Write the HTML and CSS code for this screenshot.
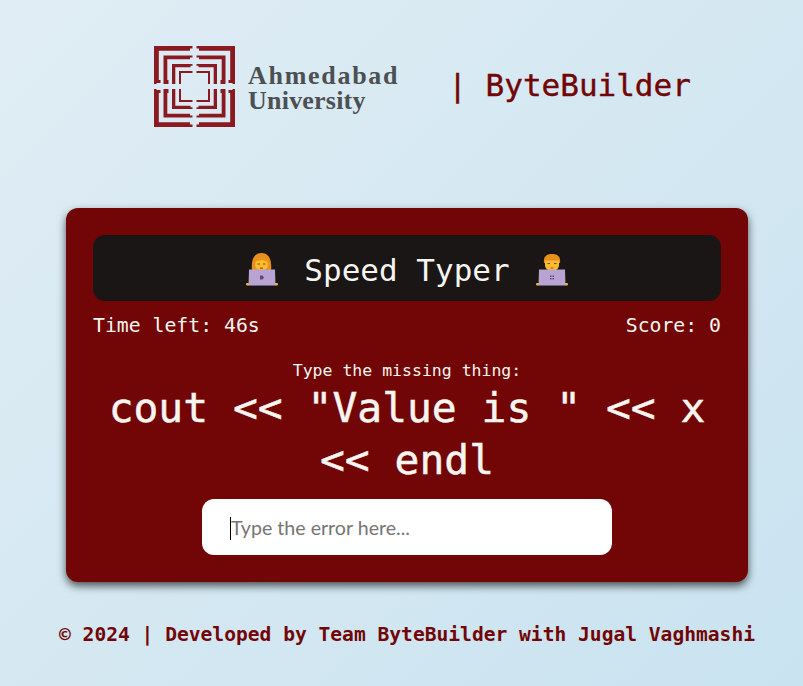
FILE: index.html
```html
<!DOCTYPE html>
<html lang="en">
<head>
    <meta charset="utf-8" />
    <title>ByteBuilder | Speed Typer</title>
    <link rel="stylesheet" href="styles.css">
</head>
<body>
    <header class="top">
        <div class="brand">
            <svg class="brand-mark" width="81" height="81" viewBox="0 0 81 81">
                <defs>
                    <g id="quad">
                        <polygon points="0,0 38.500,0 38.500,2.500 36,2.500 36,4.800 4.800,4.800 4.800,34 6.500,34 6.500,37 2.500,37 2.500,38 0,38" />
                        <polygon points="9.500,9.500 38.500,9.500 38.500,11.500 36,11.500 36,13.300 13.300,13.300 13.300,34 14.500,34 14.500,38 9.500,38" />
                        <polygon points="18,18 38.500,18 38.500,19.800 36.500,19.800 36.500,21.300 21.300,21.300 21.300,38 18,38" />
                        <polygon points="25,25 38.500,25 38.500,27 27,27 27,38 25,38" />
                    </g>
                </defs>
                <use href="#quad" />
                <use href="#quad" transform="translate(81,0) scale(-1,1)" />
                <use href="#quad" transform="translate(0,81) scale(1,-1)" />
                <use href="#quad" transform="translate(81,81) scale(-1,-1)" />
            </svg>
            <div class="brand-name">
                <span class="brand-first">Ahmedabad</span>
                <span class="brand-second">University</span>
            </div>
        </div>
        <div class="team">| ByteBuilder</div>
    </header>

    <main class="game">
        <h1 class="game-title">
            <svg class="emoji" width="32" height="34" viewBox="0 0 32 34">
                <path class="hair" d="M6 18 C5 9 7 0 15.500 0 C24 0 26 9 25 18 Z" />
                <ellipse class="skin" cx="15.500" cy="11.500" rx="6.500" ry="6.500" />
                <path class="hair" d="M8.500 9 C11 3.500 20 3.500 22.500 9 C18 6.500 13 6.500 8.500 9 Z" />
                <rect class="eye" x="11.500" y="10.500" width="2.500" height="1" />
                <rect class="eye" x="17" y="10.500" width="2.500" height="1" />
                <rect class="lips" x="14" y="14.500" width="3" height="1.300" />
                <rect class="hand" x="0" y="30" width="3.500" height="2.500" rx="1.200" />
                <rect class="hand" x="28.500" y="30" width="3.500" height="2.500" rx="1.200" />
                <path class="laptop" d="M3 16.500 H29 L29.500 32.500 H2.500 Z" />
                <rect class="laptop-foot" x="3" y="32" width="26" height="1" />
                <path class="logo-dot" d="M14 22.500 H16.500 L18 24.500 L16.500 26.500 H14 Z" />
            </svg>
            <span>Speed Typer</span>
            <svg class="emoji" width="32" height="34" viewBox="0 0 32 34">
                <path class="hair" d="M8 10 C7 3 11 1 16 1 C21 1 25 3 24 10 Z" />
                <path class="skin" d="M9 7.500 H23 V12 C23 16 19 18 16 18 C13 18 9 16 9 12 Z" />
                <rect class="eye" x="11.500" y="10" width="2.500" height="1" />
                <rect class="eye" x="18" y="10" width="2.500" height="1" />
                <rect class="lips" x="14.500" y="14.500" width="3" height="1" />
                <rect class="hand" x="0" y="30" width="3.500" height="2.500" rx="1.200" />
                <rect class="hand" x="28.500" y="30" width="3.500" height="2.500" rx="1.200" />
                <path class="laptop" d="M3 16.500 H29 L29.500 32.500 H2.500 Z" />
                <rect class="laptop-foot" x="3" y="32" width="26" height="1" />
                <path class="logo-dot" d="M14 22.500 h1.500 v1.500 h-1.500 Z M16.500 22.500 h1.500 v1.500 h-1.500 Z M14 25 h1.500 v1.500 h-1.500 Z M16.500 25 h1.500 v1.500 h-1.500 Z" />
            </svg>
        </h1>

        <div class="stats">
            <span>Time left: 46s</span>
            <span>Score: 0</span>
        </div>

        <p class="prompt">Type the missing thing:</p>
        <p class="snippet">cout &lt;&lt; "Value is " &lt;&lt; x &lt;&lt; endl</p>

        <div class="answer">
            <input class="answer-input" type="text" placeholder="Type the error here...">
            <span class="caret"></span>
        </div>
    </main>

    <footer class="credit">© 2024 | Developed by Team ByteBuilder with Jugal Vaghmashi</footer>
</body>
</html>
```

FILE: styles.css
```css
* {
    box-sizing: border-box;
}

html {
    overflow: hidden;
}

/* page runs a little wider than the window, so everything centres at 407 */
body {
    margin: 0;
    width: 814px;
    height: 686px;
    font-family: "DejaVu Sans Mono", monospace;
    background: linear-gradient(135deg, #e0edf4, #c9e3f0);
}

.top {
    display: flex;
    justify-content: center;
    align-items: center;
    gap: 49px;
    padding: 46px 0 0 31px;
}

.brand {
    display: flex;
    align-items: center;
    gap: 13px;
}

.brand-mark {
    display: block;
    fill: #8a1a1f;
}

.brand-name {
    display: flex;
    flex-direction: column;
    margin-top: 3px;
    font-family: "Liberation Serif", serif;
    font-weight: bold;
    font-size: 26px;
    line-height: 25px;
    color: #4c5052;
}

.brand-first {
    letter-spacing: 1.7px;
}

.brand-second {
    letter-spacing: 0.2px;
}

.team {
    margin-top: -3px;
    font-size: 31px;
    color: #720505;
    white-space: pre;
    -webkit-text-stroke: 0.4px #720505;
}

.game {
    width: 682px;
    height: 374px;
    margin: 81px auto 0;
    padding: 27px;
    border-radius: 12px;
    background: #720505;
    color: #f6f5f0;
    box-shadow: 0 4px 8px rgba(0, 0, 0, 0.65);
}

.game-title {
    display: flex;
    justify-content: center;
    align-items: center;
    gap: 26px;
    height: 66px;
    margin: 0;
    padding-top: 3px;
    border-radius: 12px;
    background: #1a1616;
    font-size: 31px;
    font-weight: normal;
}

.emoji {
    display: block;
}

.hair { fill: #e8901c; }
.skin { fill: #fbbc2c; }
.eye { fill: #7a4a2a; }
.lips { fill: #c2492f; }
.hand { fill: #f8b71f; }
.laptop { fill: #b8a3d3; }
.laptop-foot { fill: #6f5d86; }
.logo-dot { fill: #5c4b72; }

.stats {
    display: flex;
    justify-content: space-between;
    margin-top: 13px;
    font-size: 19.800px;
    line-height: 24px;
}

.prompt {
    margin: 23px 0 0;
    font-size: 16.500px;
    line-height: 20px;
    text-align: center;
}

.snippet {
    margin: 1px 0 0;
    font-size: 41.300px;
    line-height: 52px;
    text-align: center;
    -webkit-text-stroke: 0.5px #f6f5f0;
}

.answer {
    position: relative;
    width: 410px;
    margin: 13px auto 0;
}

.answer-input {
    display: block;
    width: 100%;
    height: 56px;
    padding: 0 29px;
    border: 0;
    border-radius: 12px;
    outline: 0;
    background: #fff;
    font-family: Lato, sans-serif;
    font-size: 19.600px;
}

.answer-input::placeholder {
    color: #757575;
}

.caret {
    position: absolute;
    left: 28px;
    top: 18px;
    width: 1px;
    height: 23px;
    background: #000;
}

.credit {
    margin-top: 41px;
    font-size: 19.600px;
    font-weight: bold;
    line-height: 24px;
    text-align: center;
    color: #720505;
}
```
